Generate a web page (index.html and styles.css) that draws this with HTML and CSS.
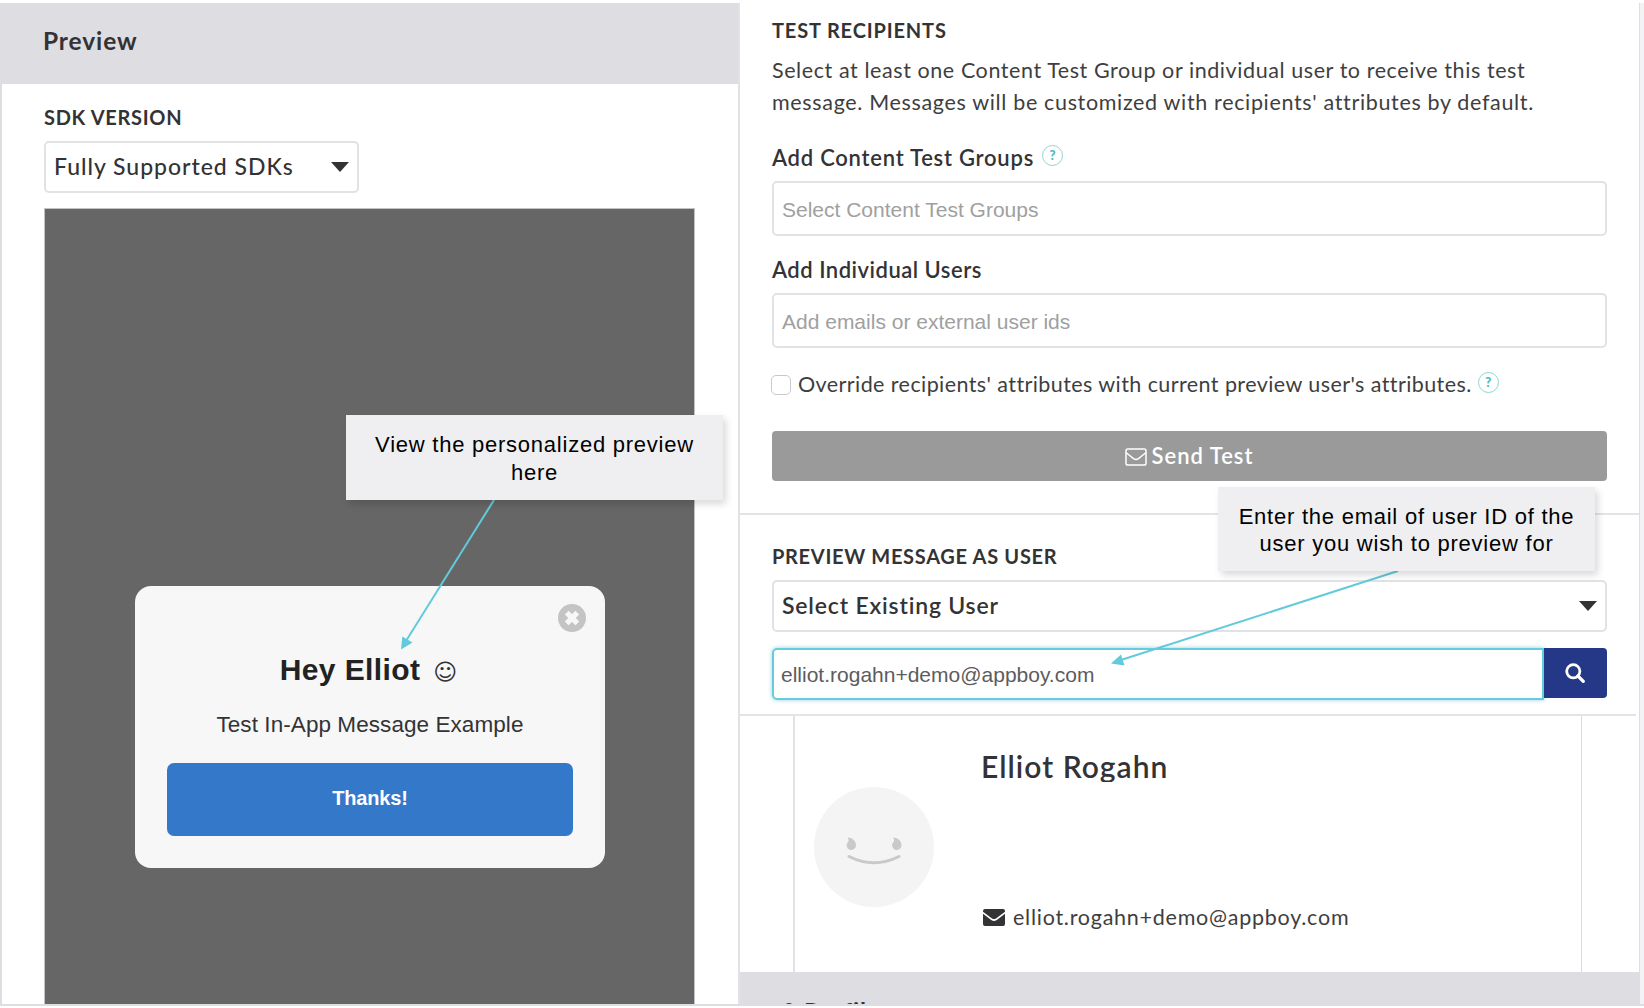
FILE: index.html
```html
<!DOCTYPE html>
<html lang="en">
<head>
<meta charset="utf-8">
<title>Preview</title>
<link rel="stylesheet" href="styles.css">
</head>
<body>
<div class="page">
  <section class="preview">
    <header class="panel-header">Preview</header>
    <div class="preview-body">
      <h3 class="heading heading-sdk">SDK VERSION</h3>
      <div class="select select-sdk"><span>Fully Supported SDKs</span><i class="caret"></i></div>
      <div class="device">
        <div class="modal">
          <svg class="close" viewBox="0 0 28 28"><circle cx="14" cy="14" r="14" fill="#c4c4c4"/><path d="M8.700 8.700l10.600 10.600M19.300 8.700l-10.600 10.600" stroke="#f7f7f7" stroke-width="5.400"/></svg>
          <div class="modal-title"><b>Hey Elliot</b><span class="smiley">☺</span></div>
          <p class="modal-text">Test In-App Message Example</p>
          <div class="modal-button">Thanks!</div>
        </div>
      </div>
    </div>
  </section>

  <section class="test">
    <div class="recipients">
      <h3 class="heading heading-test">TEST RECIPIENTS</h3>
      <p class="intro"><span class="intro-first">Select at least one Content Test Group or individual user to receive this test</span><br>message. Messages will be customized with recipients' attributes by default.</p>
      <div class="label label-groups">Add Content Test Groups<span class="help">?</span></div>
      <div class="input">Select Content Test Groups</div>
      <div class="label label-users">Add Individual Users</div>
      <div class="input">Add emails or external user ids</div>
      <div class="override"><span class="checkbox"></span><span>Override recipients' attributes with current preview user's attributes.</span><span class="help">?</span></div>
      <div class="send">
        <svg class="send-icon" viewBox="0 0 22 18"><rect x="1" y="1" width="20" height="16" rx="1.800" fill="none" stroke="#fff" stroke-width="1.500"/><path d="M1 4.500C4 7 6 8.600 8.500 10.600Q11 12.500 13.500 10.600C16 8.600 18 7 21 4.500" fill="none" stroke="#fff" stroke-width="1.500"/></svg>
        <span>Send Test</span>
      </div>
    </div>
    <div class="as-user">
      <h3 class="heading heading-user">PREVIEW MESSAGE AS USER</h3>
      <div class="select select-user"><span>Select Existing User</span><i class="caret"></i></div>
      <div class="search">
        <div class="search-input">elliot.rogahn+demo@appboy.com</div>
        <div class="search-button"><svg class="search-icon" viewBox="0 0 20 20"><circle cx="8.300" cy="8.300" r="6.600" fill="none" stroke="#fff" stroke-width="2.800"/><path d="M13 13l5.300 5.300" stroke="#fff" stroke-width="3.200" stroke-linecap="round"/></svg></div>
      </div>
    </div>
    <div class="card-wrap">
      <div class="card">
        <svg class="avatar" viewBox="0 0 120 120"><circle cx="60" cy="60" r="60" fill="#f4f4f4"/><path d="M33.500 50.500C39 50.500 42 54.500 42 58.500A4.700 4.700 0 1 1 34.500 54.500Q35 52 33.500 50.500ZM79 50.500C84.500 50.500 87.500 54.500 87.500 58.500A4.700 4.700 0 1 1 80 54.500Q80.500 52 79 50.500Z" fill="#c9c9c9"/><path d="M35 69.500Q60 82 85 69.500" fill="none" stroke="#c9c9c9" stroke-width="3" stroke-linecap="round"/></svg>
        <div class="details">
          <div class="name">Elliot Rogahn</div>
          <div class="email">
            <svg class="mail" viewBox="0 0 22 17"><path d="M2 0H20Q22 0 22 2V2.800L13 9.400Q11 10.800 9 9.400L0 2.800V2Q0 0 2 0Z" fill="#333335"/><path d="M0 4.800L8.200 10.900Q11 12.900 13.800 10.900L22 4.800V15Q22 17 20 17H2Q0 17 0 15Z" fill="#333335"/></svg>
            <span>elliot.rogahn+demo@appboy.com</span>
          </div>
        </div>
      </div>
    </div>
    <div class="profile"><svg class="user-icon" viewBox="0 0 18 20"><circle cx="9" cy="5.500" r="5.500" fill="#333335"/><path d="M0 20Q0 11 9 11T18 20Z" fill="#333335"/></svg><span>Profile</span></div>
  </section>
</div>

<svg class="arrows" viewBox="0 0 1644 1008">
  <g stroke="#62cadb" stroke-width="2"><path d="M494 500L406 641"/><path d="M1398 571L1121 660"/></g>
  <path d="M401 649.500L402.300 636.500L412.500 642.500ZM1111 663.500L1121 654.500L1124.500 665.500Z" fill="#62cadb"/>
</svg>
<div class="callout callout-view">View the personalized preview<br>here</div>
<div class="callout callout-enter">Enter the email of user ID of the<br>user you wish to preview for</div>
</body>
</html>
```
FILE: styles.css
```css
* { box-sizing: border-box; }
html, body { margin: 0; width: 1644px; height: 1008px; overflow: hidden; background: #fff; }
body { font-family: Lato, sans-serif; color: #333335; position: relative; }
h3, p { margin: 0; }

.page { display: grid; grid-template-columns: 738px 902px 4px; height: 1006px; padding-top: 3px; border-bottom: 2px solid #dedde2; }
.page::after { content: ""; background: #f3f3f5; }

.preview { display: flex; flex-direction: column; border-left: 2px solid #dedde2; min-height: 0; }
.panel-header { height: 81px; line-height: 76px; padding-left: 41px; background: #dedde2; font-weight: 700; font-size: 24.5px; letter-spacing: .9px; }
.preview-body { flex: 1; display: flex; flex-direction: column; padding: 21px 43px 0 42px; min-height: 0; }

.heading { font-size: 20px; line-height: 24px; font-weight: 700; }
.heading-sdk { letter-spacing: .69px; }
.heading-test { letter-spacing: .84px; }
.heading-user { letter-spacing: .69px; }

.select { display: flex; align-items: center; justify-content: space-between; height: 52px; padding: 0 9px 2px 9px; border: 2px solid #e2e1e6; border-radius: 5px; font-size: 23px; }
.select-sdk { width: 315px; margin-top: 12px; padding-left: 8px; padding-right: 8px; font-weight: 500; letter-spacing: .98px; }
.select-user { margin-top: 12px; padding-right: 8px; padding-left: 8px; font-weight: 600; letter-spacing: .82px; }
.caret { width: 18px; height: 10px; margin-top: 2px; background: #333335; clip-path: polygon(0 0, 100% 0, 50% 100%); }

.device { flex: 1; margin-top: 15px; border: 1px solid #c3c3c7; border-bottom: 0; background: #666; padding: 377px 89px 0 90px; min-height: 0; }
.modal { height: 282px; background: #f7f7f7; border-radius: 16px; padding: 18px 32px 32px; display: flex; flex-direction: column; }
.close { flex: none; width: 28px; height: 28px; align-self: flex-end; margin-right: -13px; }
.modal-title { display: flex; align-items: center; justify-content: center; height: 36px; margin-top: 20px; padding-right: 3px; font: 700 30px "Liberation Sans", sans-serif; color: #222; letter-spacing: .4px; }
.smiley { margin-left: 13px; font: 400 23px/36px "DejaVu Sans", sans-serif; position: relative; top: 2px; color: #333; letter-spacing: 0; }
.modal-text { margin-top: 22px; line-height: 30px; text-align: center; font-family: "Liberation Sans", sans-serif; font-size: 22.500px; letter-spacing: .07px; }
.modal-button { margin-top: auto; height: 73px; line-height: 71px; border-radius: 7px; background: #3478ca; color: #fff; text-align: center; font-family: "Liberation Sans", sans-serif; font-size: 20px; font-weight: 700; letter-spacing: -.15px; }

.test { border-left: 2px solid #e2e1e6; border-right: 1px solid #dedde2; display: flex; flex-direction: column; min-height: 0; overflow: hidden; }
.recipients { padding: 15px 32px 32px 32px; border-bottom: 2px solid #e4e4e7; }
.intro { margin-top: 12px; font-size: 21.500px; line-height: 32px; letter-spacing: .66px; color: #3e3e40; white-space: nowrap; }
.intro-first { letter-spacing: .58px; }
.label { display: flex; font-size: 22px; line-height: 28px; font-weight: 600; }
.label-groups { margin-top: 26px; letter-spacing: .75px; }
.label-users { margin-top: 20px; letter-spacing: .5px; }
.help { width: 21px; height: 21px; margin: 1px 0 0 8px; border: 1.500px solid #8ed5d3; border-radius: 50%; color: #4dbab8; font-size: 13px; line-height: 19px; font-weight: 900; text-align: center; letter-spacing: 0; }
.input { height: 55px; margin-top: 9px; padding-left: 8px; border: 2px solid #e2e1e6; border-radius: 5px; font-family: "Liberation Sans", sans-serif; font-size: 21px; line-height: 53px; color: #a0a0a0; }
.override { display: flex; margin-top: 20px; font-size: 21.500px; line-height: 32px; letter-spacing: .42px; color: #3e3e40; }
.override .help { margin: 4px 0 0 6px; }
.checkbox { width: 20px; height: 20px; margin: 7px 7px 0 -1px; border: 1.500px solid #c9c9cb; border-radius: 5px; }
.send { display: flex; align-items: center; justify-content: center; gap: 5px; height: 50px; margin-top: 31px; padding: 0 1px 2px 0; border-radius: 4px; background: #9a9a9b; color: #fff; font-size: 22px; font-weight: 600; letter-spacing: .99px; }
.send-icon { width: 22px; height: 18px; margin-top: 3px; }

.as-user { padding: 29px 32px 14px 32px; }
.search { display: flex; margin-top: 16px; height: 52px; }
.search-input { flex: 1; padding-left: 7px; border: 2px solid #66cbdb; border-radius: 5px 0 0 5px; box-shadow: 0 0 4px rgba(82, 168, 210, .6); font-family: "Liberation Sans", sans-serif; font-size: 21px; line-height: 49px; color: #5c5c5e; }
.search-button { display: flex; align-items: center; justify-content: center; width: 63px; height: 50px; border-radius: 0 4px 4px 0; background: #253888; }
.search-icon { width: 20px; height: 20px; margin-right: 2px; }

.card-wrap { height: 258px; margin-right: 3px; padding: 0 54px 0 53px; border-top: 2px solid #e4e4e7; }
.card { display: flex; height: 256px; border-left: 2px solid #e2e1e6; border-right: 1px solid #dcdcde; }
.avatar { width: 120px; height: 120px; margin: 71px 0 0 19px; }
.details { margin-left: 47px; padding-top: 32px; }
.name { height: 34px; overflow: hidden; font-size: 30px; line-height: 36px; font-weight: 600; letter-spacing: 1.030px; }
.email { display: flex; margin-top: 122px; font-size: 21.500px; line-height: 26px; letter-spacing: .75px; color: #3e3e40; }
.mail { width: 22px; height: 17px; margin: 5px 8px 0 2px; }
.profile { display: flex; flex: none; height: 32px; overflow: hidden; padding: 26px 0 0 40px; background: #dedde2; font-size: 24px; line-height: 28px; font-weight: 700; letter-spacing: .9px; }
.user-icon { flex: none; width: 18px; height: 20px; margin: 5px 6px 0 0; }

.arrows { position: absolute; left: 0; top: 0; width: 1644px; height: 1008px; }
.callout { position: absolute; background: #efeff1; box-shadow: 3px 4px 7px rgba(0, 0, 0, .15); font-family: "Liberation Sans", sans-serif; font-size: 22px; color: #000; text-align: center; letter-spacing: .76px; white-space: nowrap; }
.callout-view { left: 346px; top: 415px; width: 377px; height: 85px; padding-top: 16px; line-height: 28px; }
.callout-enter { left: 1218px; top: 487px; width: 377px; height: 84px; padding-top: 16px; line-height: 27px; }
```
